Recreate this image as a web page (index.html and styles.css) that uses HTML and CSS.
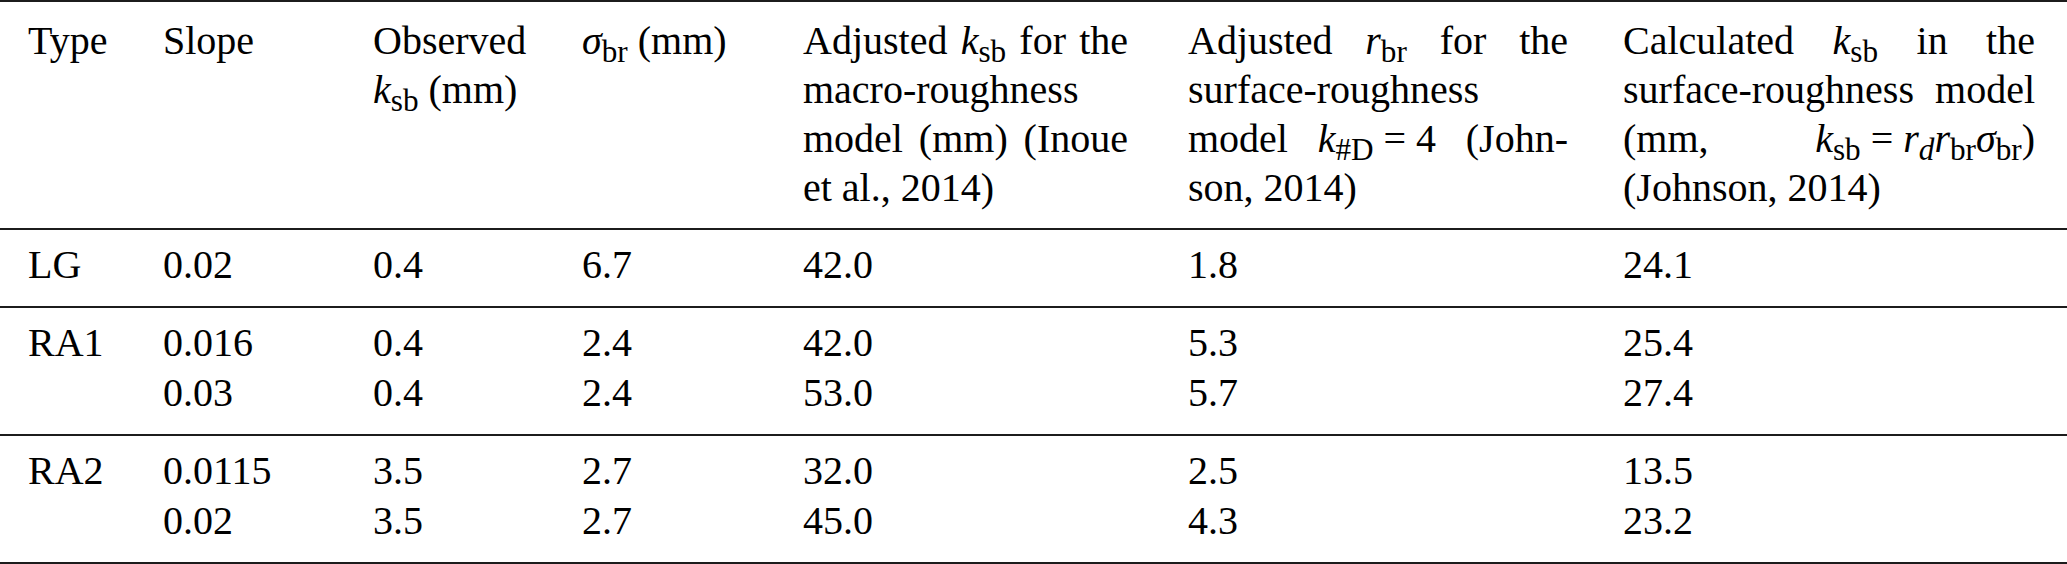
FILE: index.html
```html
<!DOCTYPE html>
<html lang="en">
<head>
  <meta charset="UTF-8">
  <meta name="viewport" content="width=device-width, initial-scale=1.0">
  <title>Bed roughness</title>
  <link rel="stylesheet" href="styles.css">
</head>
<body>
  <table class="roughness">
    <thead>
      <tr>
        <th class="c-type">Type</th>
        <th class="c-slope">Slope</th>
        <th class="c-obs">
          <span class="ln">Observed</span>
          <span class="ln"><i>k</i><sub>sb</sub> (mm)</span>
        </th>
        <th class="c-sigma"><i>σ</i><sub>br</sub> (mm)</th>
        <th class="c-macro">
          <span class="ln jl">Adjusted <span class="m"><i>k</i><sub>sb</sub></span> for the</span>
          <span class="ln">macro-roughness</span>
          <span class="ln jl">model (mm) (Inoue</span>
          <span class="ln">et al., 2014)</span>
        </th>
        <th class="c-surf">
          <span class="ln jl">Adjusted <span class="m"><i>r</i><sub>br</sub></span> for the</span>
          <span class="ln">surface-roughness</span>
          <span class="ln jl">model <span class="m"><i>k</i><sub>#D</sub> = 4</span> (John-</span>
          <span class="ln">son, 2014)</span>
        </th>
        <th class="c-calc">
          <span class="ln jl">Calculated <span class="m"><i>k</i><sub>sb</sub></span> in the</span>
          <span class="ln jl">surface-roughness model</span>
          <span class="ln jl">(mm, <span class="m"><i>k</i><sub>sb</sub> = <i>r</i><sub class="it">d</sub><i>r</i><sub>br</sub><i>σ</i><sub>br</sub>)</span></span>
          <span class="ln">(Johnson, 2014)</span>
        </th>
      </tr>
    </thead>
    <tbody>
      <tr>
        <td>LG</td><td>0.02</td><td>0.4</td><td>6.7</td><td>42.0</td><td>1.8</td><td>24.1</td>
      </tr>
    </tbody>
    <tbody>
      <tr>
        <td>RA1</td><td>0.016</td><td>0.4</td><td>2.4</td><td>42.0</td><td>5.3</td><td>25.4</td>
      </tr>
      <tr>
        <td></td><td>0.03</td><td>0.4</td><td>2.4</td><td>53.0</td><td>5.7</td><td>27.4</td>
      </tr>
    </tbody>
    <tbody>
      <tr>
        <td>RA2</td><td>0.0115</td><td>3.5</td><td>2.7</td><td>32.0</td><td>2.5</td><td>13.5</td>
      </tr>
      <tr>
        <td></td><td>0.02</td><td>3.5</td><td>2.7</td><td>45.0</td><td>4.3</td><td>23.2</td>
      </tr>
    </tbody>
  </table>
</body>
</html>
```
FILE: styles.css
```css
body {
  margin: 0;
  background: #fff;
  color: #000;
  font-family: "Liberation Serif", "Times New Roman", serif;
}

.roughness {
  width: 2067px;
  table-layout: fixed;
  border-collapse: collapse;
  border-top: 2px solid #1c1c1c;
  border-bottom: 2px solid #1c1c1c;
  font-family: "Liberation Serif", serif;
  font-size: 40px;
  line-height: 49px;
}

.roughness thead {
  border-bottom: 2px solid #1c1c1c;
}

.roughness tbody + tbody {
  border-top: 2px solid #1c1c1c;
}

th, td {
  padding: 1px 0 0 0;
  text-align: left;
  vertical-align: top;
  font-weight: normal;
  white-space: nowrap;
}

th {
  padding-top: 14px;
  padding-bottom: 16px;
}

tbody tr:first-child td {
  padding-top: 10px;
}

tbody tr:last-child td {
  padding-bottom: 17px;
}

th:first-child, td:first-child {
  padding-left: 28px;
}

/* column widths */
.c-type  { width: 135px; }
.c-slope { width: 210px; }
.c-obs   { width: 209px; }
.c-sigma { width: 221px; }
.c-macro { width: 325px; padding-right: 60px; }
.c-surf  { width: 380px; padding-right: 55px; }
.c-calc  { width: 412px; padding-right: 32px; }

.ln {
  display: block;
}

.jl {
  text-align: justify;
  text-align-last: justify;
}

.m {
  display: inline-block;
}

i {
  font-style: italic;
}

sub {
  font-size: 0.78em;
  line-height: 0;
  vertical-align: -8px;
  font-style: normal;
}

sub.it {
  font-style: italic;
}
```
